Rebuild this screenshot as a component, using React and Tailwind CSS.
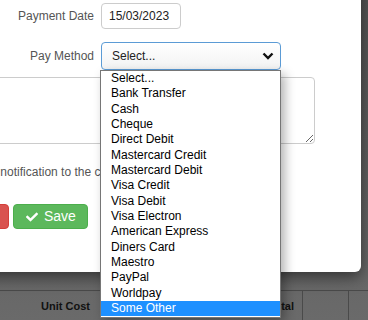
import React from 'react';
import { FaCheck } from 'react-icons/fa';

const methods = [
  'Select...',
  'Bank Transfer',
  'Cash',
  'Cheque',
  'Direct Debit',
  'Mastercard Credit',
  'Mastercard Debit',
  'Visa Credit',
  'Visa Debit',
  'Visa Electron',
  'American Express',
  'Diners Card',
  'Maestro',
  'PayPal',
  'Worldpay',
  'Some Other',
];

export default function App() {
  return (
    <div className="relative w-[368px] h-[320px] overflow-hidden bg-gradient-to-b from-[#545454] to-[#6a6a6a] font-['Liberation_Sans',Arial,sans-serif]">
      {/* Page behind the overlay */}
      <div className="pt-[290px] text-[#111]">
        <div className="flex border-t border-[#4a4a4a] h-[26px]">
          <div className="w-[98px] pr-[8px] pt-[7px] text-right text-[11px] font-bold">Unit Cost</div>
          <div className="w-[204px] pr-[8px] pt-[7px] text-right text-[11px] font-bold">Total</div>
          <div className="w-[47px] border-l border-r border-[#4a4a4a]"></div>
        </div>
        <div className="flex h-[20px] text-[11px]">
          <div className="w-[98px] pr-[8px] pt-[1px] text-right">100.00</div>
          <div className="w-[204px] pr-[8px] pt-[1px] text-right">200.00</div>
          <div className="w-[47px] border-l border-r border-[#4a4a4a]"></div>
        </div>
      </div>

      {/* Modal */}
      <div className="absolute left-[-80px] top-[-20px] w-[441px] h-[292px] bg-white rounded-b-[6px] shadow-[0_5px_15px_rgba(0,0,0,0.5)] px-[15px] pt-[23px] text-[12px]">
        <div className="flex items-center gap-[7px]">
          <label className="w-[159px] text-right text-[#555]">Payment Date</label>
          <div className="w-[80px] h-[26px] border border-[#ccc] rounded-[4px] pl-[7px] flex items-center text-[#222]">15/03/2023</div>
        </div>

        <div className="flex items-center gap-[7px] mt-[13px]">
          <label className="w-[159px] text-right text-[#555]">Pay Method</label>
          <div className="w-[180px] h-[28px] border border-[#5b9bd5] rounded-[4px] pl-[10px] pr-[4px] flex items-center justify-between text-[#222] bg-gradient-to-b from-white to-[#f3f3f3]">
            <span>Select...</span>
            <svg width="12" height="8" viewBox="0 0 12 8" className="mr-[2px]">
              <path d="M1.5 1.5 L6 6 L10.5 1.5" fill="none" stroke="#111" strokeWidth="2.4" />
            </svg>
          </div>
        </div>

        <textarea className="block mt-[7px] w-[380px] h-[67px] border border-[#ccc] rounded-[4px] resize" />

        <div className="flex items-center mt-[20px] h-[16px] ml-[15px] text-[#555]">
          <input type="checkbox" className="w-[13px] h-[13px] mr-[6px]" />
          <span>Send notification to the client</span>
        </div>

        <div className="flex gap-[4px] mt-[24px]">
          <button className="w-[74px] h-[25px] rounded-[4px] bg-[#d9534f] border border-[#d43f3a] text-white text-[14px]">Cancel</button>
          <button className="w-[75px] h-[25px] rounded-[4px] bg-[#5cb85c] border border-[#4cae4c] text-white text-[14px] flex items-center pl-[12px] gap-[6px]">
            <FaCheck className="w-[12px] h-[12px]" />
            Save
          </button>
        </div>
      </div>

      {/* Open select list */}
      <div className="absolute left-[100px] top-[70px] w-[181px] bg-white border border-[#767676] pb-[1px] shadow-[4px_4px_10px_rgba(0,0,0,0.3)] text-[12px] text-black">
        {methods.map((m) => (
          <div
            key={m}
            className={
              m === 'Some Other'
                ? 'h-[15.33px] leading-[15.33px] pl-[10px] bg-[#1e90ff] text-white'
                : 'h-[15.33px] leading-[15.33px] pl-[10px]'
            }
          >
            {m}
          </div>
        ))}
      </div>
    </div>
  );
}
